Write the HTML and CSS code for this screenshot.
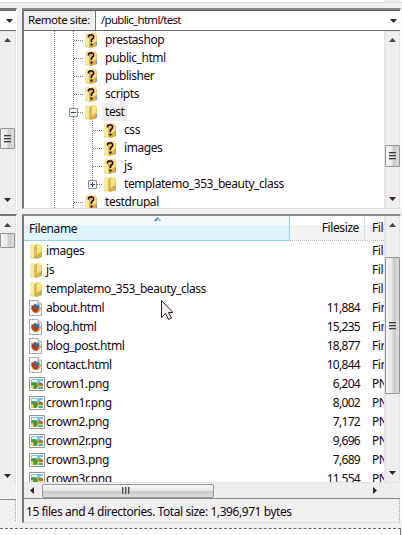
FILE: index.html
```html
<!DOCTYPE html>
<html lang="en">
<head>
<meta charset="utf-8">
<title>Remote site</title>
<link rel="stylesheet" href="styles.css">
</head>
<body>
<svg class="defs" aria-hidden="true">
  <defs>
    <symbol id="folder" viewBox="0 0 14 16">
      <path d="M1 2l4-1v2h8v11l-6 2-6-1z" fill="#e9ca6a"/>
      <path d="M1 2l4-1v14l-4-1z" fill="#f8eb9c"/>
      <path d="M5 3l3-2v10l-3 4z" fill="#dfb953"/><path d="M8 1h4v9l-4 3z" fill="#f6e48c"/>
      <path d="M6 13l6-4h1v5l-6 2z" fill="#dcb04c"/><path d="M12.500 10v4" stroke="#68a8df"/><path d="M6.500 13v2" stroke="#86b93e"/>
    </symbol>
    <symbol id="unknown" viewBox="0 0 14 16">
      <use href="#folder" width="14" height="16"/>
      <path d="M4.500 5.500V4L5.500 3h3l1 1v2L7.500 8v2" fill="none" stroke="#2b0013" stroke-width="1.700"/><path d="M6.500 11.500h2v2h-2z" fill="#2b0013"/>
    </symbol>
    <symbol id="html" viewBox="0 0 14 16">
      <path d="M.5.5h8.500l3.500 3.500v11.500H.5z" fill="#f8f8f8" stroke="#999" stroke-dasharray="2 .5"/><path d="M9 .5V4h3.500" fill="#ddd" stroke="#aaa"/>
      <circle cx="7" cy="8.500" r="4.600" fill="#db7520"/><circle cx="7.500" cy="7" r="3" fill="#2f6ca8"/>
      <path d="M2.500 5l3 2 1 2 3 1-1 2-3 0-3-3z" fill="#b63c15"/><path d="M7 4l2 0-1 2z" fill="#bce5fb"/><path d="M10 5l1 3-2 4" fill="none" stroke="#f4b149"/>
    </symbol>
    <symbol id="png" viewBox="0 0 16 14">
      <path d="M.5.5h15v13H.5z" fill="#fff" stroke="#969696"/><path d="M2 2h12v10H2z" fill="#7dc5ed"/>
      <path d="M3 3h5v2H3zM11 4h3v2h-3z" fill="#e8f8ff"/><path d="M2 8l4-1 8 2v3H2z" fill="#ecd06c"/>
      <path d="M2 6l3-1 3 1 1 3-2 3H5L4 8H2z" fill="#4a9a35"/><path d="M9 7l2-2 3 2v2h-4z" fill="#b17432"/><path d="M10 10h4v2H9z" fill="#49aeb2"/>
    </symbol>
    <symbol id="up" viewBox="0 0 7 4"><path d="M3.500 0L7 4H0z" fill="#48404b"/></symbol>
    <symbol id="down" viewBox="0 0 7 4"><path d="M0 0h7L3.500 4z" fill="#35202c"/></symbol>
  </defs>
</svg>
<div class="app">
  <div class="top-strip"><i></i></div>
  <div class="left tree-left">
    <div class="combo-left"><svg class="arrow"><use href="#down"/></svg></div>
    <div class="vbar"><svg class="up"><use href="#up"/></svg><div class="thumb t1"><i class="grip"></i></div><svg class="down"><use href="#down"/></svg></div>
  </div>
  <section class="panel tree-panel">
    <div class="address"><div class="label"><span>Remote site:</span></div><div class="path"><span>/public_html/test</span></div><svg class="arrow"><use href="#down"/></svg></div>
    <div class="tree-body">
      <div class="tree">
        <div class="node"><svg><use href="#unknown"/></svg><span>prestashop</span></div>
        <div class="node"><svg><use href="#unknown"/></svg><span>public_html</span></div>
        <div class="node"><svg><use href="#unknown"/></svg><span>publisher</span></div>
        <div class="node"><svg><use href="#unknown"/></svg><span>scripts</span></div>
        <div class="node expand"><svg><use href="#folder"/></svg><span class="selected">test</span><b class="box minus"></b></div>
        <div class="node child"><svg><use href="#unknown"/></svg><span>css</span></div>
        <div class="node child"><svg><use href="#unknown"/></svg><span>images</span></div>
        <div class="node child"><svg><use href="#unknown"/></svg><span>js</span></div>
        <div class="node child last"><svg><use href="#folder"/></svg><span>templatemo_353_beauty_class</span><b class="box plus"></b></div>
        <div class="node"><svg><use href="#unknown"/></svg><span>testdrupal</span></div>
      </div>
      <div class="vbar"><svg class="up"><use href="#up"/></svg><div class="thumb t2"><i class="grip"></i></div><svg class="down"><use href="#down"/></svg></div>
    </div>
  </section>
  <div class="left list-left">
    <div class="vbar"><svg class="up"><use href="#up"/></svg><div class="thumb t3"></div><svg class="down"><use href="#down"/></svg></div>
    <div class="status-left"></div>
  </div>
  <section class="panel list-panel">
    <div class="list-body">
      <div class="list">
        <div class="row head"><div class="name"><span>Filename</span><svg class="sort" viewBox="0 0 7 4"><path d="M0 4l3.500-4L7 4z" fill="#3d789e"/><path d="M2 4l2-3 2 3z" fill="#a7e1ff"/></svg></div><div class="size">Filesize</div><div class="type">Filetype</div></div>
        <div class="row"><div class="name"><svg><use href="#folder"/></svg><span>images</span></div><div class="size"></div><div class="type">File folder</div></div>
        <div class="row"><div class="name"><svg><use href="#folder"/></svg><span>js</span></div><div class="size"></div><div class="type">File folder</div></div>
        <div class="row"><div class="name"><svg><use href="#folder"/></svg><span>templatemo_353_beauty_class</span></div><div class="size"></div><div class="type">File folder</div></div>
        <div class="row"><div class="name"><svg><use href="#html"/></svg><span>about.html</span></div><div class="size">11,884</div><div class="type">Firefox</div></div>
        <div class="row"><div class="name"><svg><use href="#html"/></svg><span>blog.html</span></div><div class="size">15,235</div><div class="type">Firefox</div></div>
        <div class="row"><div class="name"><svg><use href="#html"/></svg><span>blog_post.html</span></div><div class="size">18,877</div><div class="type">Firefox</div></div>
        <div class="row"><div class="name"><svg><use href="#html"/></svg><span>contact.html</span></div><div class="size">10,844</div><div class="type">Firefox</div></div>
        <div class="row image"><div class="name"><svg><use href="#png"/></svg><span>crown1.png</span></div><div class="size">6,204</div><div class="type">PNG</div></div>
        <div class="row image"><div class="name"><svg><use href="#png"/></svg><span>crown1r.png</span></div><div class="size">8,002</div><div class="type">PNG</div></div>
        <div class="row image"><div class="name"><svg><use href="#png"/></svg><span>crown2.png</span></div><div class="size">7,172</div><div class="type">PNG</div></div>
        <div class="row image"><div class="name"><svg><use href="#png"/></svg><span>crown2r.png</span></div><div class="size">9,696</div><div class="type">PNG</div></div>
        <div class="row image"><div class="name"><svg><use href="#png"/></svg><span>crown3.png</span></div><div class="size">7,689</div><div class="type">PNG</div></div>
        <div class="row image"><div class="name"><svg><use href="#png"/></svg><span>crown3r.png</span></div><div class="size">11,554</div><div class="type">PNG</div></div>
      </div>
      <div class="vbar"><svg class="up"><use href="#up"/></svg><div class="thumb t4"><i class="grip"></i></div><svg class="down"><use href="#down"/></svg></div>
    </div>
    <div class="hbar"><svg class="prev" viewBox="0 0 4 7"><path d="M4 0v7L0 3.500z" fill="#35202c"/></svg><div class="hthumb"><i></i></div><svg class="next" viewBox="0 0 4 7"><path d="M0 0v7l4-3.500z" fill="#35202c"/></svg></div>
    <div class="status"><span>15 files and 4 directories. Total size: 1,396,971 bytes</span></div>
  </section>
  <div class="queue"><i></i><i></i></div>
</div>
<svg class="cursor" viewBox="0 0 12 20"><path d="M.5.5v17l4-4 3 6 3-1.500-3-5.500h4.500z" fill="#eee" stroke="#341b28"/></svg>
</body>
</html>
```
FILE: styles.css
```css
* { box-sizing: border-box; }
body { margin: 0; width: 402px; height: 535px; overflow: hidden; background: #f0f0f0; color: #170711; font: 12px/18px "Noto Sans", "Open Sans", sans-serif; letter-spacing: -.43px; white-space: nowrap; }
svg, i, b { display: block; flex: none; }
.defs { position: absolute; width: 0; height: 0; }
.app { display: grid; width: 402px; height: 535px; grid-template-columns: 17px 378px; grid-template-rows: 3px 201px 309px 7px; column-gap: 5px; row-gap: 5px; }
.top-strip { grid-column: 1 / 3; width: 402px; background: #fff; border-bottom: 1px solid #ddd; }
.top-strip i { width: 17px; height: 2px; margin-left: 384px; background: #ececec; }
.left { border-top: 2px solid #747474; border-right: 1px solid #fff; }
.combo-left { height: 21px; background: #fff; border-top: 1px solid #666; border-bottom: 1px solid #666; padding: 8px 0 0 6px; }
.arrow { width: 7px; height: 4px; }
.vbar { width: 16px; flex: none; background: #eee; border-left: 2px solid #e4e4e4; border-right: 1px dotted #d6d6d6; display: flex; flex-direction: column; align-items: center; }
.left .vbar { border-left: 0; }
.tree-left .vbar { height: 178px; }
.up, .down { width: 7px; height: 4px; }
.up { margin-top: 7px; }
.down { margin-top: auto; margin-bottom: 7px; }
.thumb { width: 15px; flex: none; margin-left: -1px; border: 1px solid #969696; border-radius: 1px; background: linear-gradient(90deg, #f5f5f5, #e7e8e8 45%, #c7cbcb 60%, #dedede); display: flex; align-items: center; justify-content: center; }
.grip { width: 7px; height: 8px; background: repeating-linear-gradient(#473d43 0 1px, #aaa 1px 2px, transparent 2px 3px); }
.t1 { height: 21px; margin-top: 86px; }
.t2 { height: 22px; margin-top: 103px; }
.t3 { height: 15px; margin-top: 6px; }
.t4 { height: 137px; margin-top: 30px; }
.panel { border: 2px solid #777; border-top-color: #8b8b8b; border-right: 1px solid #fff; border-bottom: 1px solid #ddd; background: #fff; width: 379px; min-width: 0; overflow: hidden; }
.address { height: 21px; border-top: 1px solid #555; border-bottom: 1px solid #666; display: flex; align-items: center; }
.label { height: 19px; width: 72px; background: #f0f0f0; border-right: 1px solid #777; padding-left: 4px; font-size: 11.5px; letter-spacing: -.45px; }
.path { flex: 1; padding-left: 5px; height: 19px; font-size: 11.5px; letter-spacing: -.7px; }
.address .arrow { margin-right: 3px; }
.tree-body { display: flex; height: 177px; }
.tree { flex: 1; overflow: hidden; background: repeating-linear-gradient(#777 0 1px, transparent 1px 2px) 30px 0 / 1px 100% no-repeat, repeating-linear-gradient(#777 0 1px, transparent 1px 2px) 49px 0 / 1px 100% no-repeat; }
.node { position: relative; display: flex; height: 18px; padding-left: 60px; align-items: center; }
.node > svg { width: 14px; height: 16px; margin-right: 4px; }
.node > span { padding: 0 3px; height: 18px; }
.node::before { content: ""; width: 9px; height: 1px; margin: 0 1px 0 -10px; background: repeating-linear-gradient(90deg, #777 0 1px, transparent 1px 2px); }
.child { padding-left: 79px; background: repeating-linear-gradient(#777 0 1px, transparent 1px 2px) 68px 0 / 1px 100% no-repeat; }
.last { background-size: 1px 9px; }
.selected { background: #eee; }
.box { position: absolute; left: 45px; top: 5px; width: 9px; height: 9px; border: 1px solid #8d8d8d; border-radius: 1px; background: linear-gradient(#294b88, #294b88) center / 5px 1px no-repeat, #f5f5f5; }
.plus { left: 64px; background: linear-gradient(#294b88, #294b88) center / 5px 1px no-repeat, linear-gradient(#294b88, #294b88) center / 1px 5px no-repeat, #f5f5f5; }
.list-left { display: flex; flex-direction: column; }
.list-left .vbar { height: 269px; }
.status-left { margin-top: 14px; height: 22px; border-top: 1px solid #888; border-right: 1px dotted #aaa; width: 16px; }
.list-panel { display: flex; flex-direction: column; }
.list-body { display: flex; height: 266px; overflow: hidden; }
.list { flex: 1; overflow: hidden; }
.row { display: grid; grid-template-columns: 266px 75px 19px; height: 19px; line-height: 19px; }
.name { display: flex; align-items: center; padding-left: 5px; }
.name > svg { width: 14px; height: 16px; margin-right: 3px; }
.image .name { letter-spacing: -.35px; }
.image .name > svg { width: 16px; height: 14px; margin-right: 1px; }
.name > span { height: 19px; }
.size { text-align: right; padding-right: 5px; letter-spacing: -.7px; }
.type { padding-left: 7px; overflow: hidden; }
.head { height: 23px; line-height: 24px; margin-bottom: 2px; }
.head .name { position: relative; background: linear-gradient(#f5f8f8 0 9px, #dff3fb 9px); border-right: 1px solid #98d5ee; border-bottom: 1px solid #98d5ee; letter-spacing: -.4px; }
.head .name span { height: 23px; }
.head .sort { position: absolute; left: 130px; top: 1px; width: 7px; height: 4px; margin: 0; }
.head .size, .head .type { background: linear-gradient(#fff 0 9px, #f3f3f3 9px); border-bottom: 1px dotted #bbb; }
.head .size { border-right: 1px solid #ddd; letter-spacing: -.4px; }
.hbar { height: 16px; background: #ededed; border-top: 1px dotted #ddd; display: flex; align-items: center; flex: none; }
.prev, .next { width: 4px; height: 7px; }
.prev { margin-left: 6px; }
.hthumb { width: 172px; height: 14px; margin-left: 8px; border: 1px solid #999; border-radius: 2px; background: linear-gradient(#f7f7f7, #e6e7e7 45%, #c8cbcb 55%, #dedede); display: flex; align-items: center; justify-content: center; }
.hthumb i { width: 8px; height: 7px; margin-right: 4px; background: repeating-linear-gradient(90deg, #574d53 0 1px, #aaa 1px 2px, transparent 2px 3px); }
.next { margin-left: 159px; }
.status { height: 24px; flex: none; border-top: 1px solid #888; border-right: 1px dotted #aaa; background: #f0f0f0; line-height: 25px; padding-left: 2px; }
.queue { grid-column: 1 / 3; width: 401px; background: #fff; border-top: 1px dashed #666; border-right: 1px solid #777; display: flex; }
.queue i { width: 56px; border-right: 1px solid #e5e5e5; }
.queue i:nth-child(2) { width: 291px; }
.cursor { position: absolute; left: 161px; top: 300px; width: 12px; height: 20px; }
```
